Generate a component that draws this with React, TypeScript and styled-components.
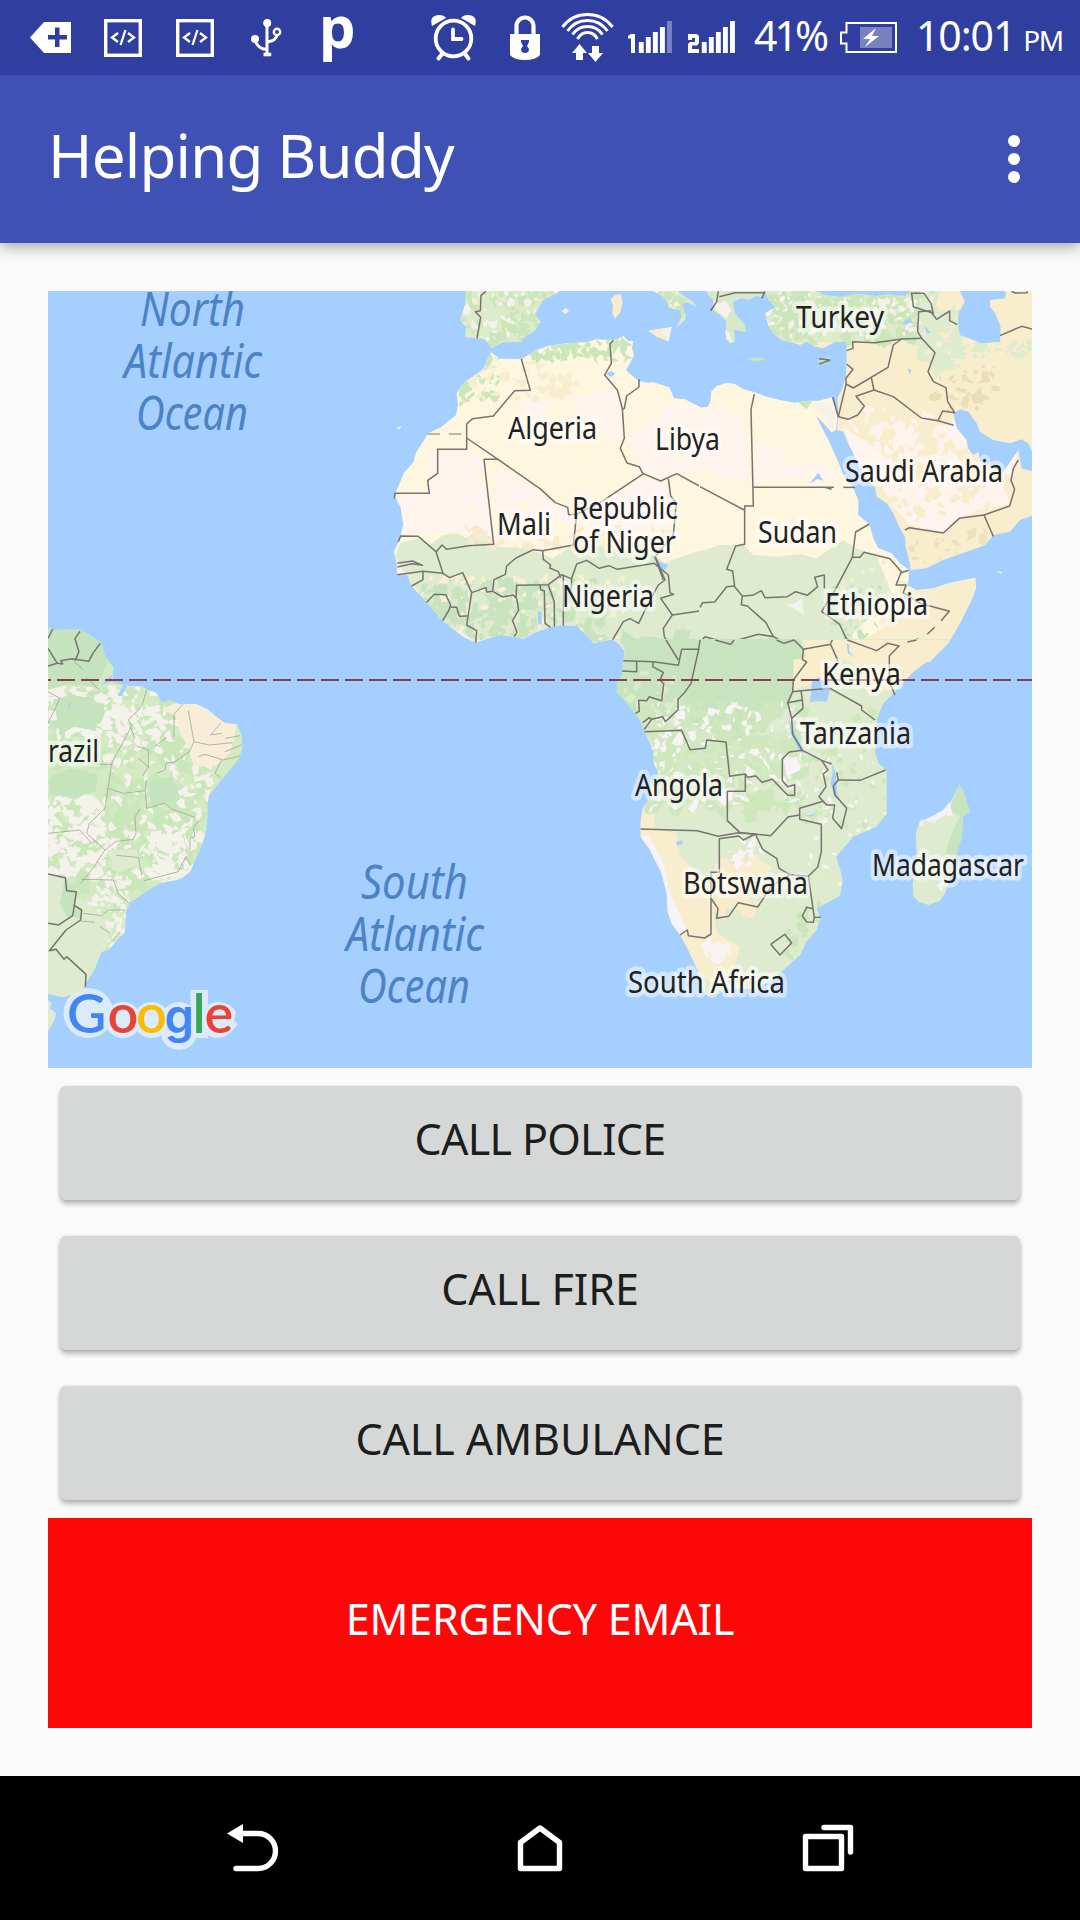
import React from "react";
import styled, { createGlobalStyle } from "styled-components";

const GlobalStyle = createGlobalStyle`
  *, *::before, *::after { box-sizing: border-box; }
  html, body { margin: 0; padding: 0; background: #fafafa; }
  body { font-family: "Noto Sans", "Open Sans", sans-serif; }
`;

const Screen = styled.div`
  display: flex;
  flex-direction: column;
  width: 1080px;
  height: 1920px;
  background: #fafafa;
  overflow: hidden;
`;

const StatusBar = styled.header`
  position: relative;
  z-index: 1;
  display: flex;
  flex: none;
  height: 75px;
  background: #303f9f;
  color: #fff;
`;

const StatusIcon = styled.svg<{ $gap: number }>`
  flex: none;
  height: 75px;
  margin-left: ${(p) => p.$gap}px;
`;

const StatusText = styled.span<{ $gap: number; $width: number; $size: number; $track?: number }>`
  flex: none;
  width: ${(p) => p.$width}px;
  margin-left: ${(p) => p.$gap}px;
  font-size: ${(p) => p.$size}px;
  letter-spacing: ${(p) => p.$track ?? 0}px;
  line-height: 70px;
  white-space: nowrap;
`;

const Period = styled.small`
  margin-left: 8px;
  font-size: 28px;
  letter-spacing: -1.5px;
`;

const PMark = styled.b`
  flex: none;
  width: 42px;
  height: 75px;
  margin-left: 37px;
  font-size: 58px;
  font-weight: 700;
  line-height: 52px;
`;

const AppBar = styled.div`
  display: flex;
  flex: none;
  align-items: center;
  justify-content: space-between;
  height: 168px;
  padding: 0 60px 0 48px;
  background: #3f51b5;
  color: #fff;
  box-shadow: 0 4px 14px rgba(0, 0, 0, 0.34);
`;

const Title = styled.h1`
  margin: 0 0 8px;
  font-size: 60px;
  font-weight: 400;
  line-height: 80px;
  letter-spacing: -0.8px;
  white-space: nowrap;
`;

const MenuButton = styled.button`
  display: flex;
  flex-direction: column;
  gap: 6px;
  padding: 0;
  border: 0;
  background: none;
`;

const Dot = styled.span`
  width: 12px;
  height: 12px;
  border-radius: 50%;
  background: #fff;
`;

const Content = styled.main`
  display: flex;
  flex: 1;
  flex-direction: column;
  padding: 48px 48px 0;
`;

const MapFrame = styled.section`
  flex: none;
  width: 984px;
  height: 777px;
  background: #a5cfff;
`;

const MapDrawing = styled.svg`
  display: block;
`;

const Buttons = styled.div`
  display: flex;
  flex: none;
  flex-direction: column;
  gap: 36px;
  padding: 18px 12px;
`;

const CallButton = styled.button<{ $track: number }>`
  height: 114px;
  padding: 0 0 9px;
  border: 0;
  border-radius: 6px;
  background: #d6d8d7;
  color: #1c1d1d;
  font: 400 43px/60px "Noto Sans", "Open Sans", sans-serif;
  letter-spacing: ${(p) => p.$track}px;
  box-shadow: 0 4px 5px rgba(0, 0, 0, 0.26), 0 0 3px rgba(0, 0, 0, 0.12);
`;

const EmergencyButton = styled.button`
  flex: none;
  height: 210px;
  padding: 0 0 9px;
  border: 0;
  background: #fd0808;
  color: #fff;
  font: 400 43px/60px "Noto Sans", "Open Sans", sans-serif;
  letter-spacing: -0.2px;
`;

const NavBar = styled.nav`
  display: flex;
  flex: none;
  align-items: center;
  justify-content: space-between;
  height: 144px;
  padding: 0 222px;
  background: #000;
`;

const NavIcon = styled.svg`
  width: 60px;
  height: 60px;
  fill: none;
  stroke: #fff;
  stroke-width: 5.4;
  stroke-linejoin: round;
  stroke-linecap: round;
`;

/* ---------- map data; each sheet is drawn at three units per pixel ---------- */

const WEST_AFRICA =
  "334,217 345,226 360,236 424,237 450,222 470,210 505,197 560,190 620,186 650,178 690,181 712,178 730,168 745,183 760,183 756,205 762,225 750,250 738,270 760,290 775,302 800,308 820,307 868,322 882,354 915,358 935,368 965,384 985,380 992,360 995,335 1020,315 1024,1145 732,1145 735,1115 720,1095 698,1078 640,1090 625,1070 605,1052 590,1037 545,1035 510,1042 460,1060 430,1077 405,1070 360,1065 320,1077 287,1088 250,1070 188,1022 155,985 140,965 115,940 95,918 82,885 52,883 50,850 42,815 60,775 70,735 62,680 45,650 50,630 72,578 100,547 108,518 145,460 185,440 228,405 234,375 230,340 250,310 310,268 324,235";
const WEST_GREEN =
  "45,830 60,790 110,775 150,795 190,765 230,760 260,775 290,752 330,770 350,800 440,805 520,835 570,800 620,790 700,800 800,790 850,850 920,825 1024,790 1024,1145 732,1145 720,1095 698,1078 640,1090 590,1037 510,1042 430,1077 360,1065 287,1088 188,1022 130,955 80,890";
const EAST_AFRICA =
  "0,384 20,382 32,370 33,335 50,318 80,308 105,312 130,328 160,335 200,350 240,360 285,368 330,362 355,362 397,352 412,410 408,450 392,458 370,430 350,410 370,440 385,480 415,545 430,585 440,600 460,625 475,660 475,705 508,732 520,775 535,805 575,820 600,850 628,870 625,905 620,915 650,930 700,925 750,908 826,893 828,925 815,960 780,1030 745,1090 690,1145 -3,1145 -3,384";
const EAST_GREEN =
  "-3,815 60,795 130,795 160,825 230,830 300,822 350,835 400,800 430,780 460,800 490,812 530,830 560,900 580,960 500,1020 460,1060 440,1145 -3,1145";
const HORN =
  "590,900 620,905 650,930 700,925 750,908 826,893 828,925 815,960 780,1030 745,1090 690,1145 400,1145 420,1090 500,1075 600,1010 640,975 600,940";
const MIDDLE_EAST =
  "195,30 205,60 228,80 195,100 205,135 220,160 245,180 270,185 300,195 320,185 345,200 370,205 405,185 440,185 440,230 438,290 425,330 412,355 415,410 410,450 430,455 445,490 465,530 500,600 525,620 530,650 560,670 580,700 600,745 615,770 617,800 630,850 632,870 680,865 730,840 800,815 855,795 880,765 930,755 960,720 999,706 999,575 965,565 960,540 955,510 935,540 910,575 870,560 840,545 835,515 820,525 805,505 800,480 770,445 760,400 780,388 805,395 830,430 840,455 880,480 930,490 965,478 985,490 999,520 999,30";
const SOUTH_AFRICA =
  "0,-3 38,-3 60,0 75,30 70,60 65,110 52,130 50,155 80,190 105,220 125,250 135,275 160,335 162,370 175,400 145,450 150,475 130,500 122,540 122,590 150,630 185,700 200,760 203,815 215,850 240,885 262,925 285,975 300,1020 310,1055 325,1068 360,1060 375,1045 465,1048 500,1030 540,1000 600,945 620,905 650,870 660,835 650,805 720,768 728,720 720,685 708,650 760,590 830,560 860,520 860,390 835,370 825,335 830,240 850,190 900,140 940,95 1000,50 1053,-3";
const MADAGASCAR =
  "1078,432 1092,460 1110,515 1088,530 1086,590 1070,640 1055,700 1035,760 1020,782 985,795 955,785 940,768 938,730 950,650 948,580 960,540 1005,532 1045,495 1060,470";
const BRAZIL =
  "20,18 40,30 115,28 140,40 185,70 195,110 220,140 218,175 260,188 265,198 300,198 350,220 365,248 390,240 415,252 470,252 500,268 555,310 590,312 605,345 607,380 598,415 540,485 505,530 502,600 497,640 482,685 450,755 420,778 360,790 330,808 268,850 258,880 255,935 205,990 185,995 165,1045 135,1095 125,1115 70,1132 20,1120";
const IBERIA =
  "258,30 255,75 240,120 258,140 255,172 290,175 315,178 335,205 370,187 425,185 440,165 462,155 480,125 465,100 490,60 535,36 540,30";
const GREECE = "18,30 25,45 40,60 38,90 60,105 78,125 78,175 90,190 105,185 102,150 138,155 135,135 105,100 100,65 125,55 150,60 165,48 190,52 195,30";
const ITALY = "815,30 850,50 870,85 900,90 905,110 888,145 915,120 918,105 905,75 920,65 950,82 940,65 915,50 890,30";

const BORDERS_WEST = [
  "424,237 451,331 404,332 340,408 278,416 260,432 260,508 173,508 173,580 143,601 148,640 45,640 43,656",
  "260,474 354,538 480,626 526,668 563,682 566,704 590,703 660,668 790,582",
  "354,538 312,538 341,793 265,797 200,808 186,795 169,815",
  "701,180 690,192 694,250 674,285 712,330 727,385 733,475 721,505 741,549 778,560 788,580 842,603 890,581 1024,654",
  "777,298 777,321 740,348 733,385 727,388",
  "865,596 872,648 889,669 880,765 825,830 850,900",
  "590,703 580,795 488,812 460,809 408,834 380,858 376,883 342,899 338,934 368,951 400,945 408,955 410,916 505,914 545,884 573,896",
  "488,812 490,838 512,855 509,864 535,875 542,893",
  "573,930 575,895 590,852 620,841 658,865 686,857 712,868 823,850 865,885 870,938 881,943 842,955 877,1005 958,993 968,968 1005,965 1024,938",
  "55,785 62,768 115,769 168,815 189,880 129,874 52,884",
  "52,861 96,851 128,856 97,843 52,850",
  "129,874 129,899 95,918", "189,880 208,893 248,878 275,938 260,1035 290,1052 287,1088",
  "140,967 163,943 197,944 212,975 207,990 188,1022", "212,982 230,982 238,1009 262,1008",
  "275,938 318,923 320,936 338,934", "410,955 416,990 398,1022 411,1057 402,1070",
  "480,914 482,930 493,932 495,1030 512,1042", "505,915 523,965 523,1040", "550,884 550,1037",
  "698,1079 730,1025 750,1016 776,1030 805,970 835,915 855,900 825,828",
  "877,1005 850,1045 853,1070 893,1137 902,1110 956,1108 960,1085 975,1070 1024,1082", "956,1108 948,1140",
  "318,34 303,46 301,92 286,95 302,112 291,175", "1010,34 1018,55 992,92",
];
const BORDERS_EAST = [
  "163,342 153,388 160,678 134,678 134,793 107,798 80,868 98,873 104,920 127,948 124,974 142,978 198,1028 220,1070",
  "160,622 400,622 375,622 395,628", "430,622 465,622", "0,620 132,690",
  "104,918 80,920 44,966 8,968 0,982", "127,948 158,946 184,932 195,953 262,950 287,935 322,946 353,920 344,892 373,885 373,925",
  "508,732 467,756 457,832 408,925 365,995 418,1032 440,1078 530,1110 562,1090 595,1094 568,1135",
  "457,832 480,832 492,817 570,836 604,875 588,915 618,915 610,938 660,970 748,994 723,1022", "604,878 626,871",
  "704,1042 682,1063", "655,1077 622,1086", "440,1078 398,1084 310,1108 312,1145", "310,1108 283,1080 246,1088 222,1070 175,1063 106,1082 96,1093 15,1070 0,1085", "395,1088 412,1145",
  "195,34 185,55", "55,34 50,65 33,92", "58,50 105,38 192,38",
  "440,212 459,205 458,185 525,188 605,177 580,195 564,262 460,324 438,312", "605,177 665,175 653,155 656,95 690,92 710,118 749,93 749,122 772,134",
  "665,175 705,218 684,275 700,305 738,323 743,365 764,398 728,393 714,422 664,414 580,350 522,330 514,293",
  "522,330 468,349 493,379 473,405 444,418 415,410 398,352", "714,422 761,436", "440,252 459,268 438,295 438,313 415,410",
  "635,40 640,80 700,100 693,70 672,40 632,40", "615,750 628,743 730,759 778,715 852,705 880,769", "852,705 929,678 944,628 933,602 940,565 955,540", "935,34 945,39 982,38 980,34", "900,167 965,139 999,148", "357,236 390,240 358,252",
];
const BORDERS_SOUTH = [
  "70,62 160,65 235,76 245,28 296,28 273,130 252,160 234,178 234,210 196,245 188,230 155,238 133,268", "198,0 235,60", "110,65 110,95 66,93", "160,65 158,80 190,97 180,120 191,132 185,182 148,170 140,182 116,181 118,214 106,220",
  "128,248 148,233 155,238", "296,28 300,0", "345,0 392,13 402,0", "134,275 245,271 270,329 316,325 320,300 378,306 389,409 436,402 436,454 382,454 382,542 420,578 512,587 564,531 599,525 599,505 670,484",
  "436,402 443,412 468,408 486,427 517,418 563,466 584,466 584,434 563,440 547,422 547,357 568,336 607,331 665,361 695,372",
  "607,331 578,283 575,235 563,188 578,155 580,120 620,66 607,58 610,28 692,13 715,65", "610,28 582,0 552,10 530,0", "692,10 697,0", "563,188 607,180 603,152 578,155", "607,180 609,205 575,235", "603,152 690,145 785,198 785,210 825,240",
  "742,0 830,32 863,10 897,18 868,47 868,125 885,165", "922,6 950,0", "665,361 684,390 670,402 678,440 657,470 680,495 704,495 698,535 725,566 740,505 705,465 700,438 715,420 710,397", "715,420 780,421 857,390",
  "122,567 292,572 355,589 416,578 466,582 430,600 416,588 358,596 358,697 333,697 333,882 314,894 265,887 262,870 240,885",
  "466,582 488,628 530,655 537,685 570,704 625,709 653,682 664,635 664,553 599,538 599,525", "333,775 354,806 350,835 386,829 415,788 473,801 515,738 570,704", "625,709 643,832 640,847 620,846 607,828 620,802 638,806", "643,832 662,832", "512,913 554,883 575,909 540,945 512,913",
];
const BORDERS_BRAZIL = [
  "38,27 24,55", "24,85 52,130 24,138", "52,130 68,132 62,122 95,116 146,124 160,98 181,70", "120,34 105,56 117,95 105,122",
  "24,762 76,773 80,812 109,815 103,856 125,870 122,900 78,930 28,992 48,988 72,1018 80,1010 138,1063 136,1100", "103,856 98,887 56,915 24,910",
];
const STATES_BRAZIL = [
  "100,122 130,150", "138,172 178,210", "320,210 305,260 265,300 275,318 215,430 205,500 195,565 148,610 140,640 195,690 155,750 122,790", "24,310 60,235 24,215",
  "165,433 218,433", "430,252 402,282 402,350", "380,352 345,378", "445,272 462,365 448,395 400,428 378,428 375,450 350,460", "543,308 512,345 545,340", "462,365 508,375 578,368", "555,355 600,347", "605,375 555,395", "475,410 495,403 550,420 600,408", "545,420 525,460 542,473",
  "270,318 285,355", "290,378 325,390 325,440 308,468", "295,415 330,445", "205,505 250,520 316,512 320,565 375,550 395,567 465,592", "320,480 316,512", "300,568 285,590 288,640 280,658 228,664 195,690", "475,603 460,625 465,650 450,655 450,690",
  "228,706 295,712 305,765", "312,782 415,755 438,710 452,738", "122,778 220,780 235,820 268,850", "130,880 185,887 205,870 255,870", "122,903 165,907", "180,920 210,940", "240,935 218,962", "24,640 120,630 155,670",
];

type Blob = { at: [number, number, number, number]; count: number; size: number; fill: string; seed: number };

/* Irregular patches of ground cover, built from a fixed seed so that they never change. */
function groundCover({ at, count, size, fill, seed }: Blob) {
  let state = seed * 7919;
  const next = () => {
    state = (state * 1664525 + 1013904223) % 4294967296;
    return state / 4294967296;
  };
  let d = "";
  for (let i = 0; i < count; i += 1) {
    const cx = at[0] + next() * at[2];
    const cy = at[1] + next() * at[3];
    const r = size * (0.35 + next() * 1.1);
    const lean = next() * Math.PI;
    const thin = 0.4 + next() * 0.5;
    for (let k = 0; k < 6; k += 1) {
      const a = k * 1.047;
      const q = r * (0.25 + next() * 1.05);
      const px = Math.cos(a) * q;
      const py = Math.sin(a) * q * thin;
      const x = cx + px * Math.cos(lean) - py * Math.sin(lean);
      const y = cy + px * Math.sin(lean) + py * Math.cos(lean);
      d += `${k ? "L" : "M"}${x.toFixed(1)} ${y.toFixed(1)}`;
    }
    d += "Z";
  }
  return <path key={`${seed}${fill}`} d={d} fill={fill} />;
}

const SHEETS: Record<string, Blob[]> = {
  west: [
    { at: [235, 235, 120, 140], count: 50, size: 17, fill: "#cbe6ba", seed: 11 },
    { at: [450, 180, 300, 65], count: 60, size: 19, fill: "#cbe6ba", seed: 12 },
    { at: [250, 235, 350, 120], count: 50, size: 18, fill: "#f7edd0", seed: 13 },
    { at: [100, 500, 850, 220], count: 30, size: 22, fill: "#fff6df", seed: 18 },
    { at: [120, 900, 560, 180], count: 200, size: 23, fill: "#c8e4be", seed: 14 },
    { at: [90, 890, 640, 200], count: 110, size: 12, fill: "#fbf0d3", seed: 15 },
    { at: [230, 745, 650, 60], count: 50, size: 18, fill: "#f6ebcd", seed: 16 },
    { at: [745, 1080, 270, 60], count: 50, size: 30, fill: "#c8e4be", seed: 17 },
  ],
  iberia: [
    { at: [240, 30, 720, 160], count: 150, size: 22, fill: "#cbe6ba", seed: 21 },
    { at: [240, 30, 720, 160], count: 130, size: 13, fill: "#f5f2ec", seed: 22 },
    { at: [240, 30, 720, 160], count: 60, size: 12, fill: "#f8edcf", seed: 23 },
  ],
  east: [
    { at: [30, 1095, 280, 45], count: 60, size: 26, fill: "#c8e4be", seed: 31 },
    { at: [390, 920, 150, 150], count: 70, size: 11, fill: "#c8e4be", seed: 32 },
    { at: [420, 830, 160, 200], count: 40, size: 12, fill: "#f7edd0", seed: 33 },
  ],
  middle: [
    { at: [195, 30, 500, 150], count: 200, size: 22, fill: "#cbe6ba", seed: 41 },
    { at: [195, 30, 520, 140], count: 110, size: 12, fill: "#f6f1ea", seed: 42 },
    { at: [660, 90, 120, 170], count: 90, size: 22, fill: "#deebcd", seed: 43 },
    { at: [760, 190, 230, 40], count: 50, size: 13, fill: "#deebcd", seed: 45 },
    { at: [700, 250, 190, 140], count: 35, size: 16, fill: "#e9deb8", seed: 44 },
    { at: [420, 390, 350, 170], count: 60, size: 22, fill: "#fff4ee", seed: 46 },
    { at: [560, 560, 300, 160], count: 40, size: 20, fill: "#f8eece", seed: 48 },
    { at: [630, 740, 230, 120], count: 30, size: 14, fill: "#eee1bf", seed: 47 },
  ],
  south: [
    { at: [120, 185, 490, 330], count: 230, size: 25, fill: "#cfe7bc", seed: 51 },
    { at: [150, 190, 480, 320], count: 150, size: 14, fill: "#f8f3f5", seed: 52 },
    { at: [600, 210, 260, 350], count: 100, size: 14, fill: "#cfe7bc", seed: 53 },
    { at: [620, 240, 250, 500], count: 70, size: 10, fill: "#f8f3ef", seed: 54 },
    { at: [560, 790, 100, 180], count: 45, size: 13, fill: "#cbe6ba", seed: 55 },
    { at: [350, 660, 140, 150], count: 55, size: 24, fill: "#f8eccc", seed: 56 },
    { at: [315, 910, 70, 45], count: 20, size: 22, fill: "#f8f3f5", seed: 57 },
    { at: [380, 590, 110, 90], count: 20, size: 15, fill: "#f8f3f5", seed: 58 },
    { at: [40, 90, 200, 150], count: 40, size: 13, fill: "#dcebcb", seed: 59 },
  ],
  brazil: [
    { at: [20, 200, 490, 640], count: 240, size: 34, fill: "#c9e7bb", seed: 61 },
    { at: [20, 200, 360, 150], count: 130, size: 18, fill: "#f5f2ec", seed: 62 },
    { at: [190, 240, 320, 560], count: 190, size: 16, fill: "#f5f2ec", seed: 63 },
    { at: [20, 530, 180, 240], count: 150, size: 19, fill: "#f5f2ec", seed: 64 },
    { at: [320, 640, 140, 140], count: 80, size: 17, fill: "#f5f2ec", seed: 66 },
    { at: [160, 760, 110, 230], count: 80, size: 14, fill: "#f5f2ec", seed: 65 },
  ],
};

const LABELS: [string, number, number, number][] = [
  ["Turkey", 796, 328, 88], ["Algeria", 508, 439, 89], ["Libya", 655, 450, 65], ["Saudi Arabia", 845, 482, 158],
  ["Mali", 497, 535, 54], ["Republic", 572, 519, 106], ["of Niger", 573, 553, 103], ["Sudan", 758, 543, 79],
  ["Nigeria", 562, 607, 92], ["Ethiopia", 825, 615, 103], ["Kenya", 822, 685, 79], ["Tanzania", 800, 744, 111],
  ["Angola", 635, 796, 88], ["Botswana", 683, 894, 125], ["Madagascar", 872, 876, 152], ["South Africa", 628, 993, 157], ["razil", 48, 762, 51],
];

const OCEANS: [string, number, number, number][] = [
  ["North", 140, 326, 105], ["Atlantic", 124, 378, 138], ["Ocean", 136, 430, 112],
  ["South", 361, 899, 107], ["Atlantic", 346, 951, 138], ["Ocean", 358, 1003, 112],
];

const LOGO: { letter: string; x: number; color: string; family?: string; size?: number }[] = [
  { letter: "G", x: 67, color: "#4285f4" },
  { letter: "o", x: 107.5, color: "#ea4335" },
  { letter: "o", x: 136, color: "#fbbc05" },
  { letter: "g", x: 164.5, color: "#4285f4", family: "Inter, sans-serif", size: 47 },
  { letter: "l", x: 192.5, color: "#34a853" },
  { letter: "e", x: 204.5, color: "#ea4335" },
];

const Lines = ({ list, thin }: { list: string[]; thin?: boolean }) => (
  <g fill="none" stroke={thin ? "#a3a998" : "#77746f"} strokeWidth={thin ? 2.5 : 4.5} strokeLinejoin="round">
    {list.map((points) => <polyline key={points} points={points} />)}
  </g>
);

const WorldMap = () => (
  <MapDrawing width="984" height="777" viewBox="48 291 984 777" role="img" aria-label="Map">
    <defs>
      <clipPath id="west"><polygon points={WEST_AFRICA} /></clipPath>
      <clipPath id="iberia"><polygon points={IBERIA} /><polygon points={ITALY} /></clipPath>
      <clipPath id="east"><polygon points={EAST_AFRICA} /></clipPath>
      <clipPath id="middle"><polygon points={MIDDLE_EAST} /></clipPath>
      <clipPath id="south"><polygon points={SOUTH_AFRICA} /></clipPath>
      <clipPath id="brazil"><polygon points={BRAZIL} /></clipPath>
    </defs>

    <g transform="translate(380 280) scale(0.33333)">
      <polygon points={WEST_AFRICA} fill="#fff6df" />
      <g clipPath="url(#west)">
        <path fill="#fff4ee" d="M150 520L260 505L315 545L335 770L200 750L60 760L50 650L140 640ZM410 380L450 350L530 370L500 395L440 405ZM575 350L700 330L725 385L730 470L690 490L660 440L600 410ZM740 480L860 400L840 380L900 370L1024 380V600L900 570L850 600L780 560ZM350 560L480 640L590 700L580 740L345 690ZM620 690L790 590L860 610L880 750L700 760L600 750Z" />
        <polygon points={WEST_GREEN} fill="#dfebcf" />
        {SHEETS.west.map(groundCover)}
      </g>
      <polygon points={IBERIA} fill="#dcebca" />
      <polygon points={ITALY} fill="#dcebca" />
      <g clipPath="url(#iberia)">{SHEETS.iberia.map(groundCover)}</g>
      <path fill="#f8eccc" d="M692 58L705 45L722 42L728 65L722 95L705 117L697 100L699 75ZM803 152L875 140L866 185L830 170Z" />
      <path fill="#f5f2ec" d="M545 93L557 84L567 93L558 102ZM50 442L65 438L58 449ZM840 155L875 140L866 180Z" />
      <path fill="#a5cfff" d="M678 280L694 273L706 282L692 291ZM815 825L838 845L865 855L855 870L838 862ZM474 992L485 996V1034L474 1030Z" />
      <Lines list={BORDERS_WEST} />
      <path d="M142 462H258" stroke="#a7a09a" strokeWidth="5" strokeDasharray="38 26" />
    </g>

    <g transform="translate(700 280) scale(0.33333)">
      <polygon points={EAST_AFRICA} fill="#fff6df" />
      <g clipPath="url(#east)">
        <path fill="#fff4ee" d="M0 400L60 380L130 420L150 600L60 590L0 560ZM165 490L250 510L260 550L380 550L410 600L280 590L165 610Z" />
        <polygon points={EAST_GREEN} fill="#dfebcf" />
        <polygon points={HORN} fill="#f8eece" />
        <path fill="#f5f2ec" d="M340 365L390 375L406 400L400 455L375 420L355 390ZM258 975L285 970L305 955L312 1005L290 990Z" />
        <path fill="#cbe6ba" d="M285 360L342 355L320 388Z" />
        {SHEETS.east.map(groundCover)}
      </g>
      <path fill="#a5cfff" d="M328 612L355 578L370 602L352 597ZM440 1085L450 1100L460 1145L438 1115ZM348 408L380 440L395 458L380 470Z" />
      <polygon points={GREECE} fill="#d8e9c9" />
      <path fill="#f5f2ec" d="M40 60L60 70L75 60L95 90L80 115L45 90ZM75 150L90 160L98 190L80 180Z" />
      <polygon points={MIDDLE_EAST} fill="#f8eece" />
      <g clipPath="url(#middle)">
        <path fill="#dcebca" d="M195 30H720L700 110L640 175L440 185L250 190L190 140Z" />
        <path fill="#fff4ee" d="M430 440L520 500L600 570L700 590L900 600L930 670L780 710L730 755L630 735L580 680L540 610L480 580ZM735 425L790 450L800 500L770 510ZM900 570L950 520L940 590Z" />
        {SHEETS.middle.map(groundCover)}
      </g>
      <path fill="#a5cfff" d="M340 30H635L615 48L560 42L530 48L470 40L420 50L375 44ZM778 30L795 65L775 100L775 140L780 165L845 190L900 185L902 140L885 100L870 80V60L915 55L918 40L910 30ZM605 130L632 112L635 125L620 134ZM675 138L692 158L680 160ZM623 265L634 270L630 285Z" />
      <path fill="#cbe6ba" d="M135 230L150 235L190 233L193 241L160 243ZM350 243L398 228L375 252Z" />
      <path fill="#f8eece" d="M890 874L908 875L903 882Z" />
      <Lines list={BORDERS_EAST} />
    </g>

    <g transform="translate(600 640) scale(0.33333)">
      <polygon points={SOUTH_AFRICA} fill="#dfebcf" />
      <g clipPath="url(#south)">
        <path fill="#c8e4be" d="M40 -3H600L620 60L580 110L575 190L510 250L430 300L330 300L270 240L200 230L130 245L50 160Z" />
        <path fill="#d6e9c6" d="M130 275L250 240L400 305L560 270L590 330L545 400L480 415L380 400L360 460L200 470L160 400Z" />
        <path fill="#f8eece" d="M580 60L620 50L610 0H1060L940 100L870 150L800 160L780 80L710 50L690 120L640 130L580 150ZM120 490L160 480L165 570L230 580L240 650L330 730L350 880L420 920L400 990L330 1030L290 980L240 885L190 700L120 590ZM340 690L400 670L440 740L350 810Z" />
        {SHEETS.south.map(groundCover)}
        <path fill="#f7f3f8" d="M120 590L145 585L190 670L210 760L260 870L240 885L203 850L185 720ZM550 360L590 350L600 390L560 410Z" />
      </g>
      <path fill="#a5cfff" d="M636 125L658 112L690 140V150L680 185L650 183L630 187ZM565 215L573 255L605 320L612 340L600 335L572 280ZM695 372L706 395L710 430L712 465L728 490L703 470L692 430L698 400ZM228 605L248 600L247 612L232 617ZM613 527L650 522L630 530ZM740 8L747 15L748 35L762 52L744 40Z" />
      <polygon points={MADAGASCAR} fill="#dfebcf" />
      <path fill="#c8e4be" d="M1078 432L1092 460L1110 515L1088 530L1086 590L1065 650L1035 640L1060 570L1080 530L1048 510Z" />
      <path fill="#f7f3f5" d="M1048 487L1060 530L1035 525L1010 540L1000 550L975 540L1030 510ZM1010 735L1035 720L1025 755ZM958 548L975 540L965 560Z" />
      <Lines list={BORDERS_SOUTH} />
    </g>

    <g transform="translate(40 620) scale(0.33333)">
      <polygon points={BRAZIL} fill="#d3eac2" />
      <g clipPath="url(#brazil)">
        <path fill="#c5e3bd" d="M20 230L200 210L210 330L100 350L20 320Z" />
        {SHEETS.brazil.map(groundCover)}
        <path fill="#c5e3bd" d="M20 15H190L205 120L170 205L100 190L20 210ZM30 470L90 445L175 465L165 515L100 535L30 520ZM40 240L90 225L160 235L190 280L160 330L100 320L60 345ZM330 480L400 470L420 540L330 560Z" />
        <path fill="#f8eed7" d="M365 268L430 240L480 245L560 310L590 312L585 345L570 400L530 435L460 440L450 390L420 340L410 290Z" />
        <path fill="#dfebcf" d="M20 765L75 775L80 815L110 830L180 880L210 940L190 1000L130 1130H20ZM200 690L290 690L300 730L230 760Z" />
        <path fill="#c5e3bd" d="M60 850L75 775L109 815L103 856L125 870L122 900L98 887L80 890Z" />
      </g>
      <path fill="#dfebcf" d="M20 1135L35 1150L30 1165L48 1180L46 1195L30 1225L20 1240Z" />
      <path fill="#a5cfff" d="M182 195L215 165V180L240 180L265 190L245 228L233 228L250 195L215 185ZM84 262L92 240L88 268Z" />
      <Lines list={STATES_BRAZIL} thin />
      <Lines list={BORDERS_BRAZIL} />
    </g>

    <path d="M33 680H1032" stroke="#8a4150" strokeWidth="2" strokeDasharray="18 6" />

    <g fontFamily="'Noto Sans', 'Open Sans', sans-serif" fontStyle="italic" fontSize="47" fill="#4d82c6">
      {OCEANS.map(([name, x, y, width]) => (
        <text key={name + y} x={x} y={y} textLength={width} lengthAdjust="spacingAndGlyphs">{name}</text>
      ))}
    </g>
    <g fontFamily="'Noto Sans', 'Open Sans', sans-serif" fontSize="31" fill="#222" stroke="#fff" strokeOpacity="0.5" strokeWidth="9" strokeLinejoin="round" paintOrder="stroke">
      {LABELS.map(([name, x, y, width]) => (
        <text key={name} x={x} y={y} textLength={width} lengthAdjust="spacingAndGlyphs">{name}</text>
      ))}
    </g>
    <g fill="#dcebfc">
      <circle cx="88.500" cy="1013" r="25" />
      <circle cx="123" cy="1020" r="18" />
      <circle cx="151.500" cy="1020" r="18" />
      <circle cx="179" cy="1020" r="18" />
      <circle cx="179" cy="1031.500" r="18.500" />
      <rect x="190.500" y="990" width="17.500" height="48" />
      <path d="M218 1002A18 18 0 1 0 230 1033L238 1024L234 1020L236 1012Q230 1002 218 1002Z" />
    </g>
    <g fontFamily="Lato, 'Open Sans', sans-serif" fontSize="54" fontWeight="600">
      {LOGO.map(({ letter, x, color, family, size }) => (
        <text key={x} x={x} y="1032.500" fill={color} fontFamily={family} fontSize={size}>{letter}</text>
      ))}
    </g>
  </MapDrawing>
);

const CodeIcon = ({ gap }: { gap: number }) => (
  <StatusIcon $gap={gap} width="38" viewBox="0 0 38 75" fill="none" stroke="#fff">
    <rect x="1.700" y="20.700" width="34.600" height="34.600" strokeWidth="3.400" />
    <path d="M14 33L8 37.500L14 42M24 33L30 37.500L24 42M21.500 30L16.500 45" strokeWidth="2.300" />
  </StatusIcon>
);

const Signal = ({ gap, sim, dim }: { gap: number; sim: 1 | 2; dim?: boolean }) => (
  <StatusIcon $gap={gap} width="47" viewBox="0 0 47 75" fill="#fff">
    {sim === 1 ? <path d="M3 34H7V53H3V38.500H0V36Z" /> : <path d="M0 34H9L11 36V43L9 45.500H4V49H11V53H0V44L2 42H7V38H4V40H0Z" />}
    {[42, 37, 32, 27, 21].map((top, i) => (
      <rect key={top} x={(sim === 1 ? 10.8 : 13.8) + i * 7.05} y={top} width="4.900" height={53 - top} opacity={dim && i === 4 ? 0.36 : 1} />
    ))}
  </StatusIcon>
);

export default function App() {
  return (
    <Screen>
      <GlobalStyle />
      <StatusBar>
        <StatusIcon $gap={30} width="41" viewBox="30 0 41 75">
          <path fill="#fff" fillRule="evenodd" d="M30 37.500L44 22H71V53H44ZM55 27.500V35H48V39.500H55V47H59.500V39.500H67V35H59.500V27.500Z" />
        </StatusIcon>
        <CodeIcon gap={33} />
        <CodeIcon gap={34} />
        <StatusIcon $gap={37} width="31" viewBox="251 0 31 75" fill="none" stroke="#fff" strokeWidth="3">
          <path d="M267 22V55M255 39Q257 49 267 49.500M267 42Q276 41 277 35" />
          <circle cx="277" cy="32" r="3.200" strokeWidth="2.400" />
          <path d="M263.500 54.500H271.200" strokeWidth="3.600" />
          <g fill="#fff" stroke="none"><circle cx="267.200" cy="23" r="4" /><circle cx="255" cy="39" r="4" /></g>
        </StatusIcon>
        <PMark>p</PMark>
        <StatusIcon $gap={70} width="46" viewBox="431 0 46 75" fill="none" stroke="#fff" strokeLinecap="round">
          <circle cx="453.500" cy="38.500" r="17.800" strokeWidth="3.800" />
          <path d="M453 29.500V39H461.500" strokeWidth="3.800" />
          <path d="M442 54L438.500 58.500M465 54L468.500 58.500" strokeWidth="4" />
          <path d="M432 26Q429 15 439 15Q444 15 446 18ZM475 26Q478 15 468 15Q463 15 461 18Z" fill="#fff" stroke="none" />
        </StatusIcon>
        <StatusIcon $gap={32} width="32" viewBox="509 0 32 75">
          <path d="M516.500 36V26a8.500 8.500 0 0 1 17 0V36" fill="none" stroke="#fff" strokeWidth="4.200" />
          <path fill="#fff" fillRule="evenodd" d="M510 34H540V55Q536 60 525 60Q514 60 510 55ZM521 40V42L523 46L521 49Q521 53 525 53Q529 53 529 49L527 46L529 42V40Z" />
        </StatusIcon>
        <StatusIcon $gap={20} width="53" viewBox="561 0 53 75">
          <path fill="none" stroke="#fff" strokeWidth="3" d="M562.500 27Q572 14.500 587.500 14.500T612.500 27M567.500 31Q575 20.500 587.500 20.500T607.500 31M572.500 34.500Q578 26.500 587.500 26.500T602.500 34.500M577.500 39Q581 32.500 587.500 32.500T597.500 39" />
          <path fill="#fff" d="M579.500 44L587 53H583V60H576V53H572ZM595.500 62L588 53H592V46H599V53H603Z" />
        </StatusIcon>
        <Signal gap={14} sim={1} dim />
        <Signal gap={13} sim={2} />
        <StatusText $gap={19} $width={73} $size={41} $track={-3}>41%</StatusText>
        <StatusIcon $gap={12} width="58" viewBox="838 0 58 75">
          <path d="M845.500 23H895V52H845.500V43.500H840V32.500H845.500Z" fill="none" stroke="#fff" strokeWidth="2" />
          <path d="M859 27H891V48H859Z" fill="#7982c0" />
          <path d="M875 28L862 39H869L864 47L878 36H871Z" fill="#fff" />
        </StatusIcon>
        <StatusText $gap={19} $width={155} $size={41} $track={-1.1}>10:01<Period>PM</Period></StatusText>
      </StatusBar>
      <AppBar>
        <Title>Helping Buddy</Title>
        <MenuButton aria-label="More options"><Dot /><Dot /><Dot /></MenuButton>
      </AppBar>
      <Content>
        <MapFrame><WorldMap /></MapFrame>
        <Buttons>
          <CallButton $track={-0.7}>CALL POLICE</CallButton>
          <CallButton $track={-0.1}>CALL FIRE</CallButton>
          <CallButton $track={-0.1}>CALL AMBULANCE</CallButton>
        </Buttons>
        <EmergencyButton>EMERGENCY EMAIL</EmergencyButton>
      </Content>
      <NavBar>
        <NavIcon viewBox="222 1818 60 60">
          <path d="M240 1833.500H258a17.500 17.500 0 0 1 0 35H236" />
          <path d="M227 1833.500L243 1824V1843Z" fill="#fff" stroke="none" />
        </NavIcon>
        <NavIcon viewBox="510 1818 60 60"><path d="M540 1828L559.500 1842.500V1868.500H520.500V1842.500Z" /></NavIcon>
        <NavIcon viewBox="798 1818 60 60"><path d="M805.500 1836.500H841.500V1868.500H805.500ZM824 1827.500H850.500V1852" /></NavIcon>
      </NavBar>
    </Screen>
  );
}
